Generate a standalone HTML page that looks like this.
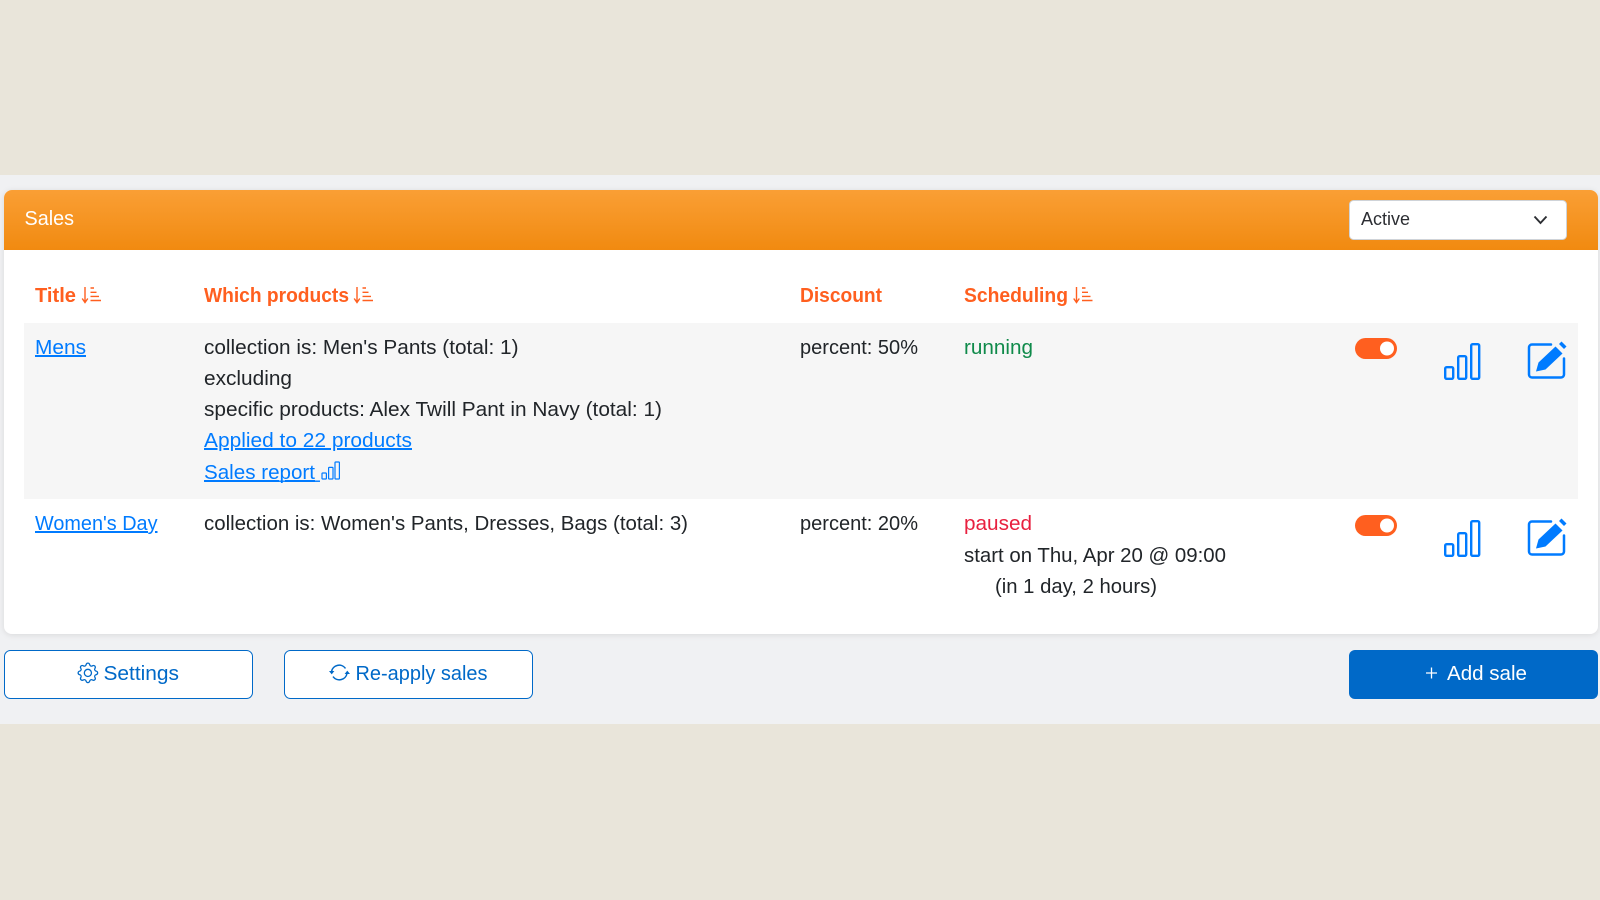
<!DOCTYPE html>
<html lang="en">
<head>
<meta charset="utf-8">
<title>Sales</title>
<style>
html,body{margin:0;padding:0;width:1600px;height:900px;overflow:hidden;background:#e9e5da}
svg{display:block;position:absolute;left:0;top:0}
text{font-family:"Liberation Sans",Arial,sans-serif;font-size:20px;fill:#212529}
.b{font-weight:bold;fill:#ff5f1f}
.l{fill:#007bff;text-decoration:underline}
.w{fill:#fff}
.u{fill:#0069c8}
</style>
</head>
<body>
<svg width="1600" height="900" viewBox="0 0 1600 900" xmlns="http://www.w3.org/2000/svg">
<defs>
<linearGradient id="g" x1="0" y1="0" x2="0" y2="1"><stop offset="0" stop-color="#fa9f35"/><stop offset="1" stop-color="#f18a10"/></linearGradient>
<filter id="s" x="-2%" y="-5%" width="104%" height="110%"><feDropShadow dx="0" dy="1" stdDeviation="3" flood-color="#000" flood-opacity=".1"/></filter>
<g id="chart" fill="none" stroke="#007bff" stroke-width="2.4"><rect x="1445.2" y="367.2" width="8" height="11.6" rx="1.4"/><rect x="1458.2" y="356.2" width="8" height="22.6" rx="1.4"/><rect x="1471.2" y="344.2" width="8" height="34.6" rx="1.4"/></g>
<g id="edit"><path d="M1551 344.5H1532a3 3 0 0 0-3 3V374.5a3 3 0 0 0 3 3H1561a3 3 0 0 0 3-3V358.5" fill="none" stroke="#007bff" stroke-width="2.5" stroke-linecap="round"/><path d="M1536 371.5L1538.5 362.5L1555.5 346.5L1562.5 353.5L1545.5 369.5Z" fill="#007bff"/><path d="M1559 344L1561.5 341.5L1566.5 346.5L1564 349Z" fill="#007bff"/></g>
<g id="sort" fill="none" stroke="#ff5f1f" stroke-width="1.4"><path d="M7 5V20M4.2 16.5L7 20.5L9.8 16.5"/><path d="M12.5 6H16M12.5 10.3H18.5M12.5 14.4H21M12.5 18.5H23"/></g>
</defs>
<rect x="0" y="175" width="1600" height="549" fill="#f0f1f3"/>
<rect x="4" y="190" width="1594" height="444" rx="8" fill="#fff" filter="url(#s)"/>
<path d="M4 250V198a8 8 0 0 1 8-8H1590a8 8 0 0 1 8 8V250Z" fill="url(#g)"/>
<text x="24.5" y="225" class="w" textLength="49.5" lengthAdjust="spacingAndGlyphs">Sales</text>
<rect x="1349.5" y="200.5" width="217" height="39" rx="4" fill="#fff" stroke="#cfd3d8"/>
<text x="1361" y="225" font-size="18" style="font-size:18px;fill:#2c2e33" textLength="49" lengthAdjust="spacingAndGlyphs">Active</text>
<path d="M1534.5 216.5L1540.5 223L1546.5 216.5" fill="none" stroke="#2c2e33" stroke-width="1.9"/>
<text x="35" y="302" class="b" textLength="41" lengthAdjust="spacingAndGlyphs">Title</text>
<use href="#sort" x="78" y="282"/>
<text x="204" y="302" class="b" textLength="145" lengthAdjust="spacingAndGlyphs">Which products</text>
<use href="#sort" x="350" y="282"/>
<text x="800" y="302" class="b" textLength="82" lengthAdjust="spacingAndGlyphs">Discount</text>
<text x="964" y="302" class="b" textLength="104" lengthAdjust="spacingAndGlyphs">Scheduling</text>
<use href="#sort" x="1069.5" y="282"/>
<rect x="24" y="323" width="1554" height="176" fill="#f6f6f6"/>
<text x="35" y="354" class="l" textLength="51" lengthAdjust="spacingAndGlyphs">Mens</text>
<text x="204" y="354" textLength="314.5" lengthAdjust="spacingAndGlyphs">collection is: Men's Pants (total: 1)</text>
<text x="204" y="385" textLength="88" lengthAdjust="spacingAndGlyphs">excluding</text>
<text x="204" y="416" textLength="458" lengthAdjust="spacingAndGlyphs">specific products: Alex Twill Pant in Navy (total: 1)</text>
<text x="204" y="447" class="l" textLength="208" lengthAdjust="spacingAndGlyphs">Applied to 22 products</text>
<text x="204" y="479" class="l" textLength="111" lengthAdjust="spacingAndGlyphs">Sales report</text>
<rect x="204" y="480.5" width="116" height="1.4" fill="#007bff"/>
<g fill="none" stroke="#007bff" stroke-width="1.2"><rect x="322" y="473" width="4.4" height="6" rx=".7"/><rect x="328.6" y="467.4" width="4.4" height="11.6" rx=".7"/><rect x="335" y="462" width="4.4" height="17" rx=".7"/></g>
<text x="800" y="354" textLength="118" lengthAdjust="spacingAndGlyphs">percent: 50%</text>
<text x="964" y="354" style="fill:#0f8a4a" textLength="69" lengthAdjust="spacingAndGlyphs">running</text>
<rect x="1355" y="338" width="42" height="21" rx="10.5" fill="#ff5f1f"/><circle cx="1387" cy="348.5" r="7" fill="#fff"/>
<use href="#chart"/>
<use href="#edit"/>
<text x="35" y="530" class="l" textLength="122.5" lengthAdjust="spacingAndGlyphs">Women's Day</text>
<text x="204" y="530" textLength="484" lengthAdjust="spacingAndGlyphs">collection is: Women's Pants, Dresses, Bags (total: 3)</text>
<text x="800" y="530" textLength="118" lengthAdjust="spacingAndGlyphs">percent: 20%</text>
<text x="964" y="530" style="fill:#e8203f" textLength="68" lengthAdjust="spacingAndGlyphs">paused</text>
<text x="964" y="562" textLength="262" lengthAdjust="spacingAndGlyphs">start on Thu, Apr 20 @ 09:00</text>
<text x="995" y="593" textLength="162" lengthAdjust="spacingAndGlyphs">(in 1 day, 2 hours)</text>
<rect x="1355" y="515" width="42" height="21" rx="10.5" fill="#ff5f1f"/><circle cx="1387" cy="525.5" r="7" fill="#fff"/>
<use href="#chart" y="177"/>
<use href="#edit" y="177"/>
<rect x="4.5" y="650.5" width="248" height="48" rx="6" fill="#fff" stroke="#0069c8"/>
<rect x="284.5" y="650.5" width="248" height="48" rx="6" fill="#fff" stroke="#0069c8"/>
<rect x="1349" y="650" width="249" height="49" rx="6" fill="#0069c8"/>
<g transform="translate(77.5 662.5) scale(1.3)" fill="#0069c8"><path d="M8 4.754a3.246 3.246 0 1 0 0 6.492 3.246 3.246 0 0 0 0-6.492zM5.754 8a2.246 2.246 0 1 1 4.492 0 2.246 2.246 0 0 1-4.492 0z"/><path d="M9.796 1.343c-.527-1.79-3.065-1.79-3.592 0l-.094.319a.873.873 0 0 1-1.255.52l-.292-.16c-1.64-.892-3.433.902-2.54 2.541l.159.292a.873.873 0 0 1-.52 1.255l-.319.094c-1.79.527-1.79 3.065 0 3.592l.319.094a.873.873 0 0 1 .52 1.255l-.16.292c-.892 1.64.901 3.434 2.541 2.54l.292-.159a.873.873 0 0 1 1.255.52l.094.319c.527 1.79 3.065 1.79 3.592 0l.094-.319a.873.873 0 0 1 1.255-.52l.292.16c1.64.893 3.434-.902 2.54-2.541l-.159-.292a.873.873 0 0 1 .52-1.255l.319-.094c1.79-.527 1.79-3.065 0-3.592l-.319-.094a.873.873 0 0 1-.52-1.255l.16-.292c.893-1.64-.902-3.433-2.541-2.54l-.292.159a.873.873 0 0 1-1.255-.52l-.094-.319zm-2.633.283c.246-.835 1.428-.835 1.674 0l.094.319a1.873 1.873 0 0 0 2.693 1.115l.291-.16c.764-.415 1.6.42 1.184 1.185l-.159.292a1.873 1.873 0 0 0 1.116 2.692l.318.094c.835.246.835 1.428 0 1.674l-.319.094a1.873 1.873 0 0 0-1.115 2.693l.16.291c.415.764-.42 1.6-1.185 1.184l-.291-.159a1.873 1.873 0 0 0-2.693 1.116l-.094.318c-.246.835-1.428.835-1.674 0l-.094-.319a1.873 1.873 0 0 0-2.692-1.115l-.292.16c-.764.415-1.6-.42-1.184-1.185l.159-.291A1.873 1.873 0 0 0 1.945 8.93l-.319-.094c-.835-.246-.835-1.428 0-1.674l.319-.094A1.873 1.873 0 0 0 3.06 4.377l-.16-.292c-.415-.764.42-1.6 1.185-1.184l.292.159a1.873 1.873 0 0 0 2.692-1.115l.094-.319z"/></g>
<text x="103.5" y="680" class="u" textLength="75.5" lengthAdjust="spacingAndGlyphs">Settings</text>
<path d="M331.5 671.5a7.8 7.8 0 0 1 14-3.1M347 673.5a7.8 7.8 0 0 1-14 3.1" fill="none" stroke="#0069c8" stroke-width="1.5"/>
<path d="M329 671h5.4l-2.7 3.4zM344.6 674h5.4l-2.7-3.4z" fill="#0069c8"/>
<text x="355.5" y="680" class="u" textLength="132" lengthAdjust="spacingAndGlyphs">Re-apply sales</text>
<path d="M1431.5 667.5v11M1426 673h11" stroke="#fff" stroke-width="1.3" fill="none"/>
<text x="1447" y="680" class="w" textLength="80" lengthAdjust="spacingAndGlyphs">Add sale</text>
</svg>
</body>
</html>
